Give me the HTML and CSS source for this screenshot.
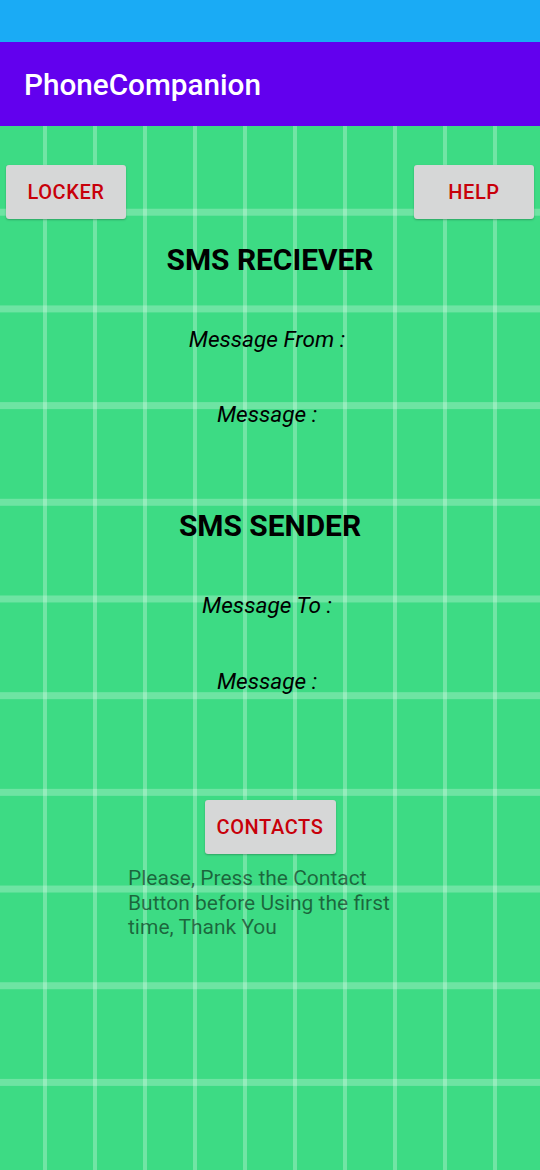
FILE: index.html
```html
<!DOCTYPE html>
<html lang="en">
<head>
<meta charset="utf-8">
<title>PhoneCompanion</title>
<link rel="stylesheet" href="styles.css">
</head>
<body>
<div class="screen">
  <div class="status-bar"></div>
  <header class="app-bar">
    <h1 class="app-title">PhoneCompanion</h1>
  </header>
  <main class="content">
    <div class="top-row">
      <button class="btn btn-side">LOCKER</button>
      <button class="btn btn-side">HELP</button>
    </div>
    <h2 class="section-title title-receiver">SMS RECIEVER</h2>
    <p class="label label-from">Message From :</p>
    <p class="label label-msg1">Message :</p>
    <h2 class="section-title title-sender">SMS SENDER</h2>
    <p class="label label-to">Message To :</p>
    <p class="label label-msg2">Message :</p>
    <button class="btn btn-contacts">CONTACTS</button>
    <p class="hint">Please, Press the Contact Button before Using the first time, Thank You</p>
  </main>
</div>
</body>
</html>
```

FILE: styles.css
```css
* {
  box-sizing: border-box;
}

html, body {
  margin: 0;
  padding: 0;
}

body {
  width: 540px;
  height: 1170px;
  overflow: hidden;
  font-family: Roboto, "Noto Sans", "Liberation Sans", sans-serif;
  background: #3ddb84;
}

.screen {
  display: flex;
  flex-direction: column;
  height: 1170px;
}

.status-bar {
  height: 42px;
  background: #1aabf5;
  flex: none;
}

.app-bar {
  height: 84px;
  background: #6200ee;
  flex: none;
  display: flex;
  align-items: center;
  padding-left: 24px;
}

.app-title {
  margin: 0;
  color: #ffffff;
  font-size: 29.7px;
  font-weight: 500;
  line-height: 36px;
  letter-spacing: 0px;
  transform: translateY(1px);
}

.content {
  flex: 1;
  display: flex;
  flex-direction: column;
  align-items: center;
  padding-top: 39px;
  background-color: #3ddb84;
  background-image:
    linear-gradient(to bottom, transparent 83px, rgba(255, 255, 255, 0.25) 83px, rgba(255, 255, 255, 0.25) 90px, transparent 90px),
    linear-gradient(to right, transparent 43px, rgba(255, 255, 255, 0.27) 43px, rgba(255, 255, 255, 0.27) 47px, transparent 47px);
  background-size: 100% 96.7px, 50px 100%;
  background-repeat: repeat;
}

.top-row {
  width: 100%;
  display: flex;
  justify-content: space-between;
  padding: 0 6px;
}

.btn {
  border: none;
  margin: 0;
  background: #d6d7d7;
  color: #c8000a;
  font-family: Roboto, "Noto Sans", "Liberation Sans", sans-serif;
  font-weight: 500;
  font-size: 20px;
  letter-spacing: 0.6px;
  height: 54px;
  border-radius: 3px;
  box-shadow: 0 1px 2px rgba(0, 0, 0, 0.25);
  padding: 0;
}

.btn-side {
  width: 120px;
}

.section-title {
  margin: 0;
  font-size: 29.9px;
  font-weight: 700;
  line-height: 34px;
  color: #000000;
}

.title-receiver {
  margin-top: 24px;
}

.title-sender {
  margin-top: 80px;
}

.label {
  margin: 0;
  font-size: 22.6px;
  font-style: italic;
  line-height: 28px;
  color: #000000;
  transform: translateX(-3px);
}

.label-from {
  margin-top: 49px;
}

.label-msg1 {
  margin-top: 47px;
}

.label-to {
  margin-top: 49px;
}

.label-msg2 {
  margin-top: 48px;
}

.btn-contacts {
  margin-top: 104px;
  width: 131px;
}

.hint {
  align-self: flex-start;
  margin: 12px 0 0 128px;
  width: 290px;
  font-size: 21px;
  line-height: 24.5px;
  color: rgba(0, 0, 0, 0.54);
}
```
